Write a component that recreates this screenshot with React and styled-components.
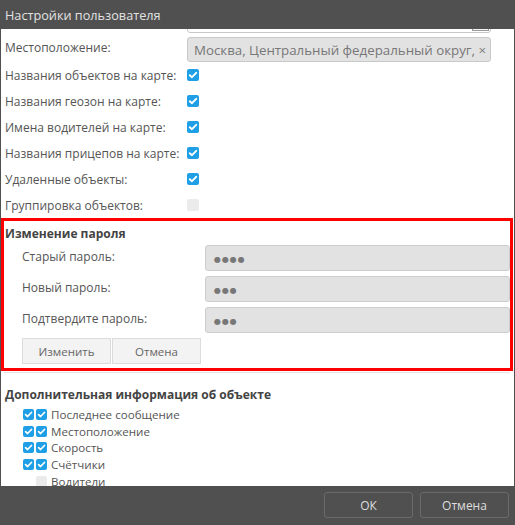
import React, { useLayoutEffect, useRef } from "react";
import styled, { createGlobalStyle } from "styled-components";

const GlobalStyle = createGlobalStyle`
  html, body { margin: 0; padding: 0; }
  body {
    background: #505050;
    font-family: "Open Sans", "Noto Sans", sans-serif;
  }
  * { box-sizing: border-box; }
`;

const Dialog = styled.div`
  width: 515px;
  height: 525px;
  display: flex;
  flex-direction: column;
  background: #505050;
`;

const TitleBar = styled.div`
  flex: none;
  height: 29px;
  padding-left: 5px;
  display: flex;
  align-items: center;
  color: #e2e2e2;
  font-size: 12.7px;
`;

const Body = styled.div`
  flex: 1;
  min-height: 0;
  margin: 0 1px;
  background: #fff;
  overflow-y: auto;
  scrollbar-width: none;
  &::-webkit-scrollbar { display: none; }
`;

const Row = styled.div`
  display: grid;
  grid-template-columns: 182px 304px;
  align-items: center;
  padding-left: 4px;
  height: ${(p) => (p.$field ? "30px" : "26px")};
  padding-top: ${(p) => (p.$field ? "5px" : "0")};
  color: #555;
  font-size: 12px;
`;

const Label = styled.span`
  white-space: nowrap;
  padding-bottom: ${(p) => (p.$raise ? "4px" : "0")};
`;

const Select = styled.div`
  position: relative;
  height: 26px;
  border: 1px solid #c8c8c8;
  border-radius: 3px;
  background: #fff;
`;

const SelectButton = styled.div`
  position: absolute;
  right: 1px;
  bottom: 1px;
  width: 17px;
  height: 22px;
  border: 1px solid #9a9a9a;
  background: #f4f4f4;
`;

const TagBox = styled.div`
  height: 25px;
  border: 1px solid #c9c9c9;
  border-radius: 3px;
  background: #e2e2e2;
  color: #777;
  font-size: 13.3px;
  display: flex;
  align-items: center;
  padding-left: 6px;
  white-space: nowrap;
  overflow: hidden;
`;

const Box = styled.span`
  display: inline-flex;
  align-items: center;
  justify-content: center;
  width: ${(p) => p.$size || 12}px;
  height: ${(p) => p.$size || 12}px;
  border-radius: 2px;
  background: ${(p) => (p.$checked ? "#1e9fe6" : "#ebebeb")};
  flex: none;
`;

const Checkbox = ({ checked, size }) => (
  <Box $checked={checked} $size={size}>
    {checked && (
      <svg width={size || 12} height={size || 12} viewBox="0 0 12 12">
        <polyline
          points="2.8,6.2 5,8.2 9.2,3.8"
          fill="none"
          stroke="#fff"
          strokeWidth="1.9"
          strokeLinecap="round"
          strokeLinejoin="round"
        />
      </svg>
    )}
  </Box>
);

const PasswordSection = styled.section`
  border: 3px solid #ff0000;
  margin-right: 1px;
  padding: 0 0 4px 1px;
`;

const SectionTitle = styled.div`
  color: #444;
  font-size: 12px;
  font-weight: 700;
  height: 24px;
  margin-top: ${(p) => p.$mt || 0}px;
  display: flex;
  align-items: center;
  padding-left: ${(p) => p.$pad || 0}px;
`;

const PassRow = styled.div`
  display: grid;
  grid-template-columns: 183px 1fr;
  align-items: center;
  padding-left: 17px;
  height: 31px;
  padding-bottom: 5px;
  color: #555;
  font-size: 12px;
`;

const PassInput = styled.div`
  height: 26px;
  border: 1px solid #cdcdcd;
  border-radius: 3px;
  background: #e2e2e2;
  color: #777;
  font-family: "DejaVu Sans", sans-serif;
  font-size: 8px;
  letter-spacing: 0.9px;
  display: flex;
  align-items: center;
  padding: 3px 0 0 8px;
`;

const ButtonGroup = styled.div`
  display: flex;
  padding-left: 17px;
`;

const LightButton = styled.button`
  width: 89px;
  height: 26px;
  margin-right: 1px;
  border: 1px solid #dcdcdc;
  background: #f3f3f3;
  color: #666;
  font-family: inherit;
  font-size: 11.5px;
  padding: 0;
`;

const Divider = styled.div`
  height: 1px;
  margin: 1px 4px 0 3px;
  background: #e4e4e4;
`;

const InfoList = styled.div`
  padding-left: 22px;
`;

const InfoItem = styled.div`
  display: flex;
  align-items: center;
  gap: 2px;
  height: 16.8px;
  color: #555;
  font-size: 11.6px;
  padding-left: ${(p) => (p.$indent ? "13px" : "0")};
`;

const ItemText = styled.span`
  margin-left: 2px;
  white-space: nowrap;
`;

const Footer = styled.div`
  flex: none;
  height: 39px;
  display: flex;
  justify-content: flex-end;
  align-items: flex-start;
  gap: 7px;
  padding: 6px 6px 0 0;
`;

const DarkButton = styled.button`
  width: 89px;
  height: 26px;
  border: 1px solid #6a6a6a;
  border-radius: 3px;
  background: #505050;
  color: #dedede;
  font-family: inherit;
  font-size: 12px;
  padding: 0;
`;

const flags = [
  ["Названия объектов на карте:", true],
  ["Названия геозон на карте:", true],
  ["Имена водителей на карте:", true],
  ["Названия прицепов на карте:", true],
  ["Удаленные объекты:", true],
  ["Группировка объектов:", false],
];

const passwords = [
  ["Старый пароль:", 4],
  ["Новый пароль:", 3],
  ["Подтвердите пароль:", 3],
];

const info = [
  ["Последнее сообщение", true],
  ["Местоположение", true],
  ["Скорость", true],
  ["Счётчики", true],
  ["Водители", false],
];

export default function App() {
  const bodyRef = useRef(null);

  // the settings list is shown scrolled a little down
  useLayoutEffect(() => {
    if (bodyRef.current) bodyRef.current.scrollTop = 27;
  }, []);

  return (
    <Dialog>
      <GlobalStyle />
      <TitleBar>Настройки пользователя</TitleBar>
      <Body ref={bodyRef}>
        <Row $field>
          <Label />
          <Select>
            <SelectButton />
          </Select>
        </Row>
        <Row $field>
          <Label $raise>Местоположение:</Label>
          <TagBox>Москва, Центральный федеральный округ, ×</TagBox>
        </Row>
        {flags.map(([label, on]) => (
          <Row key={label}>
            <Label>{label}</Label>
            <Checkbox checked={on} />
          </Row>
        ))}

        <PasswordSection>
          <SectionTitle>Изменение пароля</SectionTitle>
          {passwords.map(([label, n]) => (
            <PassRow key={label}>
              <Label $raise>{label}</Label>
              <PassInput>{"●".repeat(n)}</PassInput>
            </PassRow>
          ))}
          <ButtonGroup>
            <LightButton>Изменить</LightButton>
            <LightButton>Отмена</LightButton>
          </ButtonGroup>
        </PasswordSection>
        <Divider />

        <SectionTitle $mt={9} $pad={4}>
          Дополнительная информация об объекте
        </SectionTitle>
        <InfoList>
          {info.map(([label, on]) => (
            <InfoItem key={label} $indent={!on}>
              {on && <Checkbox checked size={11} />}
              <Checkbox checked={on} size={11} />
              <ItemText>{label}</ItemText>
            </InfoItem>
          ))}
        </InfoList>
      </Body>
      <Footer>
        <DarkButton>ОК</DarkButton>
        <DarkButton>Отмена</DarkButton>
      </Footer>
    </Dialog>
  );
}
